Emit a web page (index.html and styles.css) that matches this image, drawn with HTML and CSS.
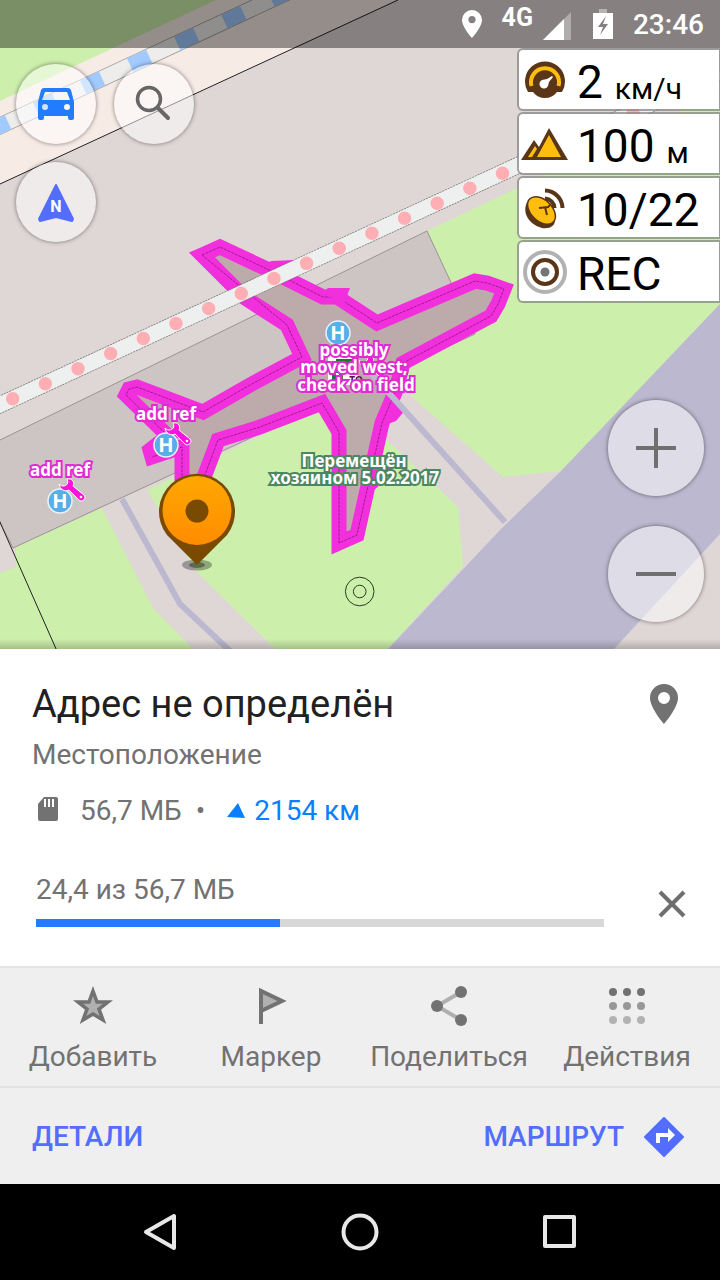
FILE: index.html
```html
<!DOCTYPE html>
<html lang="ru">
<head>
    <meta charset="UTF-8">
    <meta name="viewport" content="width=device-width, initial-scale=1.0">
    <title>Карта</title>
    <link rel="stylesheet" href="styles.css">
</head>
<body>
    <div class="screen">
        <main class="map">
            <svg class="map-canvas" viewBox="0 0 720 649" preserveAspectRatio="xMidYMin slice">
                <defs>
                    <linearGradient id="pinFill" x1="0" y1="0" x2="0" y2="1">
                        <stop offset="0" stop-color="#ffa800"/>
                        <stop offset="1" stop-color="#ff8c00"/>
                    </linearGradient>
                    <g id="helipad">
                        <circle r="12" fill="#58aee8" stroke="#e8f4fc" stroke-width="1.5"/>
                        <text class="helipad-text" y="7">H</text>
                    </g>
                    <g id="wrench">
                        <path d="M-2-7C0-3-2 0-6 0C-8 0-9-1-10-2C-9 4-4 6 0 4L10 14C13 17 18 12 15 9L4 0C6-4 3-8-2-7Z" fill="#f714dc" stroke="#fff" stroke-width="1"/>
                        <circle cx="12" cy="11" r="1.3" fill="#fff"/>
                    </g>
                </defs>

                <!-- land -->
                <rect width="720" height="649" fill="#dfd7d6"/>
                <path d="M0 0H398L0 184Z" fill="#f7ebe6"/>
                <path d="M0 0H216L0 101Z" fill="#cdefac"/>
                <path d="M427 231L720 92V304L562 471L503 477L385 373Z" fill="#cdefac"/>
                <path d="M147 490L340 398L370 428L388 441L458 507L463 566L388 649H275L197 572Z" fill="#cdefac"/>
                <path d="M16 547L102 508L153 608L193 649H0V573L16 567Z" fill="#cdefac"/>
                <path d="M720 304L560 472L500 530L388 649H614L720 534Z" fill="#bcb8cf"/>
                <path d="M-2 441L427 231L475 334L13 548L-2 518Z" fill="#cdc5c4" stroke="#9a9392"/>
                <path d="M0 184L398 0" stroke="#222"/>
                <path d="M-1 520L57 651" stroke="#222"/>

                <!-- taxiways -->
                <path d="M-11 131L290-9" stroke="#999" stroke-width="16.5"/>
                <path d="M-11 131L290-9" stroke="#eeedec" stroke-width="15"/>
                <path d="M-11 131L290-9" stroke="#a2caff" stroke-width="15" stroke-dasharray="21 30.9"/>
                <path d="M122 499L180 604L230 651" fill="none" stroke="#bcb8cf" stroke-width="6"/>

                <!-- aircraft outline -->
                <g class="plane">
                    <path d="M202 255L220 247L267 269L323 297L337 297L377 323L475 281L487 283L504 289L498 304L491 316L403 363L396 390L382 423L357 535L339 543V432L322 403L260 427L218 440L203 480L197 500L182 480V447L152 457L150 450L168 436L126 395L129 389L137 387L203 412L250 385L302 357L287 325L245 298Z" fill="#bdaaaa" stroke="#f22fdc" stroke-width="15" stroke-miterlimit="3"/>
                    <path d="M202 255L220 247L267 269L323 297L337 297L377 323L475 281L487 283L504 289L498 304L491 316L403 363L396 390L382 423L357 535L339 543V432L322 403L260 427L218 440L203 480" fill="none" stroke="#8c1480" stroke-width=".8" stroke-dasharray="3 1"/>
                    <path d="M182 480V447L152 457M168 436L126 395L129 389L137 387L203 412L250 385L302 357L287 325L202 255" fill="none" stroke="#8c1480" stroke-width=".8" stroke-dasharray="3 1"/>
                    <path d="M262 264L272 261L294 260L300 275ZM322 293L328 288H350L344 304ZM392 400L406 409L396 421L382 426ZM375 462L392 468L386 480L374 490Z" fill="#f22fdc"/>
                </g>
                <path d="M370 372L505 522" stroke="#bcb8cf" stroke-width="6"/>

                <path d="M-20 414L720 72" stroke="#777" stroke-width="17" stroke-dasharray="2 1"/>
                <path d="M-20 414L720 72" stroke="#eef0ef" stroke-width="15.5"/>
                <path d="M12.7 398.7L720 73" stroke="#ffafb3" stroke-width="13.5" stroke-linecap="round" stroke-dasharray="0 35.95"/>

                <!-- points of interest -->
                <use href="#helipad" x="338" y="333"/>
                <rect x="328" y="355" width="30" height="30" fill="#fff"/>
                <path d="M336 361H352M334 361V382M336 371H346M341 372V382" fill="none" stroke="#1b7a2b" stroke-width="4"/>
                <text class="poi-caption" x="356" y="384">ТО</text>
                <use href="#wrench" x="369" y="362"/>
                <use href="#helipad" x="166" y="445"/>
                <use href="#wrench" x="175" y="430"/>
                <use href="#helipad" x="60" y="501"/>
                <use href="#wrench" x="69" y="486"/>
                <text class="map-note" x="166" y="420">add ref</text>
                <text class="map-note" x="60" y="476">add ref</text>
                <text class="map-note" x="354" y="356">possibly</text>
                <text class="map-note" x="354" y="373">moved west;</text>
                <text class="map-note" x="356" y="391">check on field</text>
                <text class="map-note green" x="354" y="467">Перемещён</text>
                <text class="map-note green" x="355" y="484">хозяином 5.02.2017</text>

                <!-- selected point -->
                <ellipse cx="197" cy="565" rx="15" ry="5.5" fill="#000" opacity=".3"/>
                <ellipse cx="197" cy="565" rx="8" ry="3" fill="#000" opacity=".35"/>
                <path d="M197 565L167 535A38 38 0 1 1 227 535Z" fill="#7a4a00"/>
                <circle cx="197" cy="510.500" r="34.500" fill="url(#pinFill)"/>
                <circle cx="197" cy="511" r="11.500" fill="#7a4a00"/>
                <circle cx="359.700" cy="591.500" r="14.300" fill="none" stroke="#2c3a20"/>
                <circle cx="359.700" cy="591.500" r="6.300" fill="none" stroke="#2c3a20"/>
            </svg>

            <header class="status-bar">
                <svg class="status-pin" width="20" height="28" viewBox="0 0 20 28"><path fill="#fff" fill-rule="evenodd" d="M10 0A10 10 0 0 0 0 10C0 17 10 28 10 28S20 17 20 10A10 10 0 0 0 10 0ZM10 6A3.600 3.600 0 1 1 10 13.200A3.600 3.600 0 1 1 10 6Z"/></svg>
                <span class="status-net">4G</span>
                <svg class="status-signal" width="28" height="28" viewBox="0 0 28 28"><path fill="#fff" opacity=".35" d="M28 0V28H0Z"/><path fill="#fff" d="M21 7V28H0Z"/></svg>
                <svg class="status-battery" width="20" height="30" viewBox="0 0 20 30"><path fill="#fff" opacity=".4" d="M6 0H14V4H6Z"/><path fill="#fff" fill-rule="evenodd" d="M0 4H20V30H0ZM13 7L5 18H10L7 26L15 15H10Z"/></svg>
                <span class="status-time">23:46</span>
            </header>

            <div class="map-controls">
                <div class="control-group">
                    <button class="round-button" aria-label="Профиль">
                        <svg width="40" height="40" viewBox="0 0 40 40"><path fill="#237bff" fill-rule="evenodd" d="M8 4H32Q34 4 35 6L38 18V34Q38 36 36 36H34Q32 36 32 34V32H8V34Q8 36 6 36H4Q2 36 2 34V18L5 6Q6 4 8 4ZM9 8L6 16H34L31 8ZM9 20A3 3 0 1 0 9 26A3 3 0 1 0 9 20ZM31 20A3 3 0 1 0 31 26A3 3 0 1 0 31 20Z"/></svg>
                    </button>
                    <button class="round-button" aria-label="Поиск">
                        <svg width="40" height="40" viewBox="0 0 40 40" fill="none" stroke="#666"><circle cx="15" cy="15" r="11.500" stroke-width="3.500"/><path d="M24 24L34 34" stroke-width="4" stroke-linecap="round"/></svg>
                    </button>
                    <button class="round-button" aria-label="Компас">
                        <svg width="40" height="40" viewBox="0 0 40 40"><path d="M20 3L37 37L36 39L20 35L4 39L3 37Z" fill="#536dfe" stroke="#536dfe" stroke-width="2" stroke-linejoin="round"/><text class="compass-text" x="20" y="30">N</text></svg>
                    </button>
                </div>

                <div class="widgets">
                    <div class="widget">
                        <svg width="48" height="48" viewBox="0 0 48 48">
                            <path d="M7 36A20 20 0 1 1 41 36H36A15 15 0 0 1 12 36Z" fill="#5a3517"/>
                            <path d="M10.500 30A14 14 0 1 1 37.500 30" fill="none" stroke="#ffbe0d" stroke-width="4"/>
                            <path d="M21 24L26 23L31 20L32 21L28 26L27 30A4.500 4.500 0 1 1 21 24Z" fill="#fff"/>
                        </svg>
                        <span class="value">2</span><span class="unit">км/ч</span>
                    </div>
                    <div class="widget">
                        <svg width="48" height="48" viewBox="0 0 48 48">
                            <path d="M0 40L13 20L18 27L28 8L47 40Z" fill="#5a3517"/>
                            <path d="M28 15L40 37H16ZM14 26L16 29L11 37H7Z" fill="#ffbe0d"/>
                        </svg>
                        <span class="value">100</span><span class="unit">м</span>
                    </div>
                    <div class="widget">
                        <svg width="48" height="48" viewBox="0 0 48 48">
                            <path d="M24 6.500A18 18 0 0 1 41.500 24M24 14.500A10 10 0 0 1 33.500 24" fill="none" stroke="#5a3517" stroke-width="4"/>
                            <path d="M8 16C0 24 5 40 21 44C29 45 34 42 34 36Z" fill="#5a3517"/>
                            <ellipse cx="20.500" cy="26.500" rx="16.500" ry="10.500" transform="rotate(44 20.500 26.500)" fill="#ffbe0d" stroke="#5a3517" stroke-width="1.500"/>
                            <path d="M18 24L27 23L30 20M24 23L26 31" fill="none" stroke="#5a3517" stroke-width="2"/>
                        </svg>
                        <span class="value">10/22</span>
                    </div>
                    <div class="widget">
                        <svg width="48" height="48" viewBox="0 0 48 48" fill="none" stroke-width="4">
                            <circle cx="24" cy="24" r="20" stroke="#b2b2b2"/>
                            <circle cx="24" cy="24" r="12" stroke="#5a3517"/>
                            <circle cx="24" cy="24" r="4.500" fill="#757575"/>
                        </svg>
                        <span class="value">REC</span>
                    </div>
                </div>
            </div>

            <div class="zoom-controls">
                <button class="round-button large" aria-label="Приблизить">
                    <svg width="40" height="40" viewBox="0 0 40 40"><path d="M0 20H40M20 0V40" stroke="#6f6f6f" stroke-width="4"/></svg>
                </button>
                <button class="round-button large" aria-label="Отдалить">
                    <svg width="40" height="40" viewBox="0 0 40 40"><path d="M0 20H40" stroke="#6f6f6f" stroke-width="4"/></svg>
                </button>
            </div>
        </main>

        <section class="place">
            <div class="place-header">
                <h1 class="place-title">Адрес не определён</h1>
                <svg width="28" height="40" viewBox="0 0 28 40"><path fill="#727272" fill-rule="evenodd" d="M14 0A14 14 0 0 0 0 14C0 24 14 40 14 40S28 24 28 14A14 14 0 0 0 14 0ZM14 8A6 6 0 1 1 14 20A6 6 0 1 1 14 8Z"/></svg>
            </div>
            <p class="place-type">Местоположение</p>
            <div class="place-info">
                <svg class="sd-card" width="20" height="24" viewBox="0 0 20 24"><path fill="#727272" fill-rule="evenodd" d="M6 0H18Q20 0 20 2V22Q20 24 18 24H2Q0 24 0 22V7ZM6 2V10H8V2ZM10 2V10H12V2ZM14 2V10H16V2Z"/></svg>
                <span class="map-size">56,7 МБ</span>
                <span class="separator">•</span>
                <svg width="18" height="16" viewBox="0 0 18 16"><path d="M11 0L18 15L0 14Z" fill="#0a80ff"/></svg>
                <span class="distance">2154 км</span>
            </div>
            <div class="download">
                <div class="download-body">
                    <label class="download-label" for="download">24,4 из 56,7 МБ</label>
                    <progress class="download-bar" id="download" value="24.4" max="56.7"></progress>
                </div>
                <button class="cancel-button" aria-label="Отмена">
                    <svg width="28" height="28" viewBox="0 0 28 28"><path d="M2 2L26 26M26 2L2 26" stroke="#6f6f6f" stroke-width="4"/></svg>
                </button>
            </div>
        </section>

        <div class="actions">
            <button class="action">
                <svg width="40" height="40" viewBox="0 0 40 40"><path d="M20 5L24 16L35 16L26 23L30 34L20 28L10 34L14 23L5 16L16 16Z" fill="#b0b0b0" stroke="#727272" stroke-width="3.500"/></svg>
                <span>Добавить</span>
            </button>
            <button class="action">
                <svg width="40" height="40" viewBox="0 0 40 40"><path d="M10 38V5L31 15L10 25" fill="#b0b0b0" stroke="#727272" stroke-width="4"/></svg>
                <span>Маркер</span>
            </button>
            <button class="action">
                <svg width="40" height="40" viewBox="0 0 40 40"><path d="M32 6L8 20L32 34" fill="none" stroke="#b0b0b0" stroke-width="4"/><g fill="#727272"><circle cx="32" cy="6" r="6"/><circle cx="8" cy="20" r="6"/><circle cx="32" cy="34" r="6"/></g></svg>
                <span>Поделиться</span>
            </button>
            <button class="action">
                <svg width="40" height="40" viewBox="0 0 40 40"><g fill="#727272"><circle cx="6" cy="6" r="4"/><circle cx="20" cy="6" r="4"/><circle cx="34" cy="6" r="4"/></g><g fill="#989898"><circle cx="6" cy="20" r="4"/><circle cx="20" cy="20" r="4"/><circle cx="34" cy="20" r="4"/></g><g fill="#b2b2b2"><circle cx="6" cy="34" r="4"/><circle cx="20" cy="34" r="4"/><circle cx="34" cy="34" r="4"/></g></svg>
                <span>Действия</span>
            </button>
        </div>

        <div class="bottom-bar">
            <button class="text-button">ДЕТАЛИ</button>
            <button class="text-button">
                МАРШРУТ
                <svg width="40" height="40" viewBox="0 0 40 40"><path d="M20 1L39 20L20 39L1 20Z" fill="#536dfe" stroke="#536dfe" stroke-width="2" stroke-linejoin="round"/><path d="M12 26V16H24V11L31 18L24 25V20H16V26Z" fill="#fff"/></svg>
            </button>
        </div>

        <nav class="nav-bar">
            <button class="nav-button" aria-label="Назад">
                <svg width="40" height="40" viewBox="0 0 40 40"><path d="M34 4V36L6 20Z"/></svg>
            </button>
            <button class="nav-button" aria-label="Домой">
                <svg width="40" height="40" viewBox="0 0 40 40"><circle cx="20" cy="20" r="16.500"/></svg>
            </button>
            <button class="nav-button" aria-label="Обзор">
                <svg width="40" height="40" viewBox="0 0 40 40"><path d="M5 5H34V34H5Z"/></svg>
            </button>
        </nav>
    </div>
</body>
</html>
```
FILE: styles.css
```css
* {
    box-sizing: border-box;
}
body {
    margin: 0;
    font-family: Roboto, "Noto Sans", sans-serif;
    font-size: 28px;
    line-height: 32px;
    color: #727272;
}
svg {
    display: block;
    flex-shrink: 0;
}
button {
    padding: 0;
    border: none;
    background: none;
    font: inherit;
    color: inherit;
    cursor: pointer;
}
.screen {
    display: flex;
    flex-direction: column;
    min-height: 100vh;
}

/* map */
.map {
    position: relative;
    flex: 1;
    display: flex;
    flex-direction: column;
    justify-content: space-between;
    overflow: hidden;
    background-color: #dfd7d6;
}
.map::after {
    content: "";
    position: absolute;
    left: 0;
    right: 0;
    bottom: 0;
    height: 10px;
    background: linear-gradient(transparent, rgba(0, 0, 0, 0.2));
}
.map-canvas {
    position: absolute;
    top: 0;
    left: 0;
    width: 100%;
    height: 100%;
}
.map-note {
    font: bold 17px "Noto Sans", sans-serif;
    text-anchor: middle;
    fill: #fff;
    stroke: #e02bd0;
    stroke-width: 4px;
    paint-order: stroke;
}
.map-note.green {
    stroke: #4c8560;
}
.helipad-text {
    font: bold 20px "Noto Sans", sans-serif;
    text-anchor: middle;
    fill: #fff;
}
.poi-caption {
    font: bold 10px "Noto Sans", sans-serif;
    text-anchor: middle;
    fill: #5a1050;
}
.compass-text {
    font: bold 16px Roboto, sans-serif;
    text-anchor: middle;
    fill: #fff;
}

.status-bar {
    position: relative;
    display: flex;
    align-items: center;
    justify-content: flex-end;
    height: 48px;
    padding-right: 16px;
    background-color: rgba(0, 0, 0, 0.4);
    color: #fff;
}
.status-net {
    margin: 0 10px 12px 20px;
    font-size: 25px;
    font-weight: 700;
    line-height: 24px;
}
.status-signal {
    margin-top: 4px;
}
.status-battery {
    margin: 0 20px 0 22px;
}
.status-time {
    padding-top: 2px;
    font-weight: 500;
}

.map-controls {
    position: relative;
    display: flex;
    justify-content: space-between;
    align-items: flex-start;
    margin-bottom: auto;
}
.control-group {
    display: grid;
    grid-template-columns: repeat(2, 80px);
    gap: 18px;
    padding: 16px;
}
.round-button {
    display: flex;
    justify-content: center;
    align-items: center;
    width: 80px;
    height: 80px;
    border-radius: 50%;
    background-color: rgba(255, 255, 255, 0.5);
    box-shadow: 0 0 4px rgba(0, 0, 0, 0.5);
}
.round-button.large {
    width: 96px;
    height: 96px;
}
.zoom-controls {
    position: relative;
    display: flex;
    flex-direction: column;
    align-items: flex-end;
    gap: 30px;
    padding: 0 16px 27px;
}
.widgets {
    display: flex;
    flex-direction: column;
    gap: 1px;
    width: 203px;
}
.widget {
    display: flex;
    align-items: center;
    height: 63px;
    padding-left: 2px;
    border: 2px solid rgba(128, 128, 128, 0.7);
    border-right-width: 1px;
    border-radius: 6px 0 0 6px;
    background-color: #fff;
    background-clip: padding-box;
    color: #000;
}
.widget .value {
    margin-left: 8px;
    padding-top: 4px;
    font-size: 46px;
    line-height: 54px;
}
.widget .unit {
    align-self: flex-end;
    margin: 0 0 4px 12px;
    font-size: 30px;
}

/* place card */
.place {
    padding: 32px 32px 39px;
    background-color: #fff;
}
.place-header {
    display: flex;
    justify-content: space-between;
    align-items: center;
    padding-right: 10px;
}
.place-title {
    margin: 0;
    font-size: 38px;
    font-weight: 400;
    line-height: 46px;
    color: #212121;
}
.place-type {
    margin: 12px 0 24px;
}
.place-info {
    display: flex;
    align-items: center;
    padding-left: 6px;
}
.sd-card {
    margin-bottom: 4px;
}
.map-size {
    margin-left: 22px;
}
.separator {
    margin: 0 22px 0 14px;
}
.distance {
    margin-left: 9px;
    color: #0a80ff;
}
.download {
    display: flex;
    align-items: center;
    justify-content: space-between;
    gap: 54px;
    margin-top: 47px;
    padding: 0 2px 0 4px;
}
.download-body {
    flex: 1;
    display: flex;
    flex-direction: column;
    gap: 13px;
}
.download-bar {
    width: 100%;
    height: 8px;
    appearance: none;
    border: none;
    background-color: #d8d8d8;
}
.download-bar::-webkit-progress-bar {
    background-color: #d8d8d8;
}
.download-bar::-webkit-progress-value {
    background-color: #237bff;
}
.cancel-button {
    padding-top: 6px;
}

/* actions */
.actions {
    display: grid;
    grid-template-columns: repeat(4, 1fr);
    height: 120px;
    padding: 0 4px;
    border-top: 2px solid #e3e3e3;
    background-color: #efefef;
}
.action {
    display: flex;
    flex-direction: column;
    align-items: center;
    gap: 15px;
    padding-top: 18px;
}
.bottom-bar {
    display: flex;
    justify-content: space-between;
    height: 98px;
    padding: 2px 36px 0 32px;
    border-top: 2px solid #e3e3e3;
    background-color: #efefef;
}
.text-button {
    display: flex;
    align-items: center;
    gap: 20px;
    font-weight: 500;
    color: #536dfe;
}
.nav-bar {
    display: grid;
    grid-template-columns: repeat(3, 1fr);
    height: 96px;
    padding: 0 60px;
    background-color: #000;
}
.nav-button {
    display: flex;
    justify-content: center;
    align-items: center;
}
.nav-button svg {
    fill: none;
    stroke: #e8e8e8;
    stroke-width: 4px;
    stroke-linejoin: round;
}
```
